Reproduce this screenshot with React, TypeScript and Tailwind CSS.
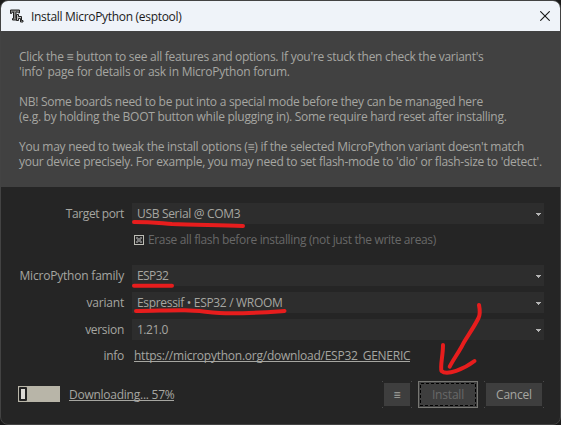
import type { ReactNode } from "react";

function Line({ children, className }: { children?: ReactNode; className?: string }) {
  return <div className={`h-[15px] whitespace-nowrap ${className ?? ""}`}>{children}</div>;
}

function Label({ children, className }: { children: ReactNode; className?: string }) {
  return <div className={`w-[123px] shrink-0 text-right whitespace-nowrap ${className ?? ""}`}>{children}</div>;
}

function Combo({ children, className }: { children: ReactNode; className?: string }) {
  return (
    <div className="ml-[8px] flex h-[21px] w-[412px] items-center justify-between bg-[#2d2d2d] pr-[3px] pl-[5px]">
      <span className={className}>{children}</span>
      <svg width="5" height="3" viewBox="0 0 5 3" className="mt-px" shapeRendering="crispEdges">
        <path d="M0 0H5V1H4V2H3V3H2V2H1V1H0Z" fill="#b4b4b4" />
      </svg>
    </div>
  );
}

function Corners() {
  return (
    <svg className="absolute inset-0 h-full w-full" shapeRendering="crispEdges">
      <rect x="0" y="0" width="1" height="1" fill="#4a4a4a" />
      <rect x="100%" y="0" width="1" height="1" fill="#4a4a4a" transform="translate(-1 0)" />
      <rect x="0" y="100%" width="1" height="1" fill="#4a4a4a" transform="translate(0 -1)" />
      <rect x="100%" y="100%" width="1" height="1" fill="#4a4a4a" transform="translate(-1 -1)" />
    </svg>
  );
}

export default function App() {
  return (
    <div className="relative h-[425px] w-[561px] overflow-hidden bg-[#1a1a1a] font-['Open_Sans','Noto_Sans',sans-serif] text-[12px] leading-[15px] text-[#a6a6a1]">
      <div className="flex h-[425px] w-[561px] flex-col overflow-hidden rounded-[8px] border border-[#434343] bg-[#252525]">
        <header className="flex h-[30px] shrink-0 items-center justify-between bg-[#eff3f9] pr-[10px] pl-[9px] text-[#1b1b1b]">
          <div className="flex items-center">
            <svg width="14" height="14" viewBox="0 0 14 14" fill="none">
              <path d="M.5 1H9.5V4H8.5L7.5 3H6V9.5H7V11H2.5V9.5H3.5V3H2.5L1.5 4.5H.5Z" fill="#8a8a8a" stroke="#222" />
              <path d="M6.5 5.5H8.5V7.5H11.5V11.5H13V13H10.5V9.5H8.5V11.5H6.5Z" fill="#bbb" stroke="#222" />
            </svg>
            <span className="ml-[7px] tracking-[-0.31px]">Install MicroPython (esptool)</span>
          </div>
          <svg width="10" height="10" viewBox="0 0 10 10" stroke="#171717" strokeWidth="1.1">
            <path d="M.3 .3L9.7 9.7M9.7 .3L.3 9.7" />
          </svg>
        </header>
        <section className="h-[156px] shrink-0 bg-[#414141] pt-[18px] pl-[18px]">
          <Line className="tracking-[-0.28px]">Click the ≡ button to see all features and options. If you're stuck then check the variant's</Line>
          <Line className="tracking-[-0.22px]">'info' page for details or ask in MicroPython forum.</Line>
          <Line />
          <Line className="tracking-[-0.27px]">NB! Some boards need to be put into a special mode before they can be managed here</Line>
          <Line className="tracking-[-0.265px]">(e.g. by holding the BOOT button while plugging in). Some require hard reset after installing.</Line>
          <Line />
          <Line className="tracking-[-0.27px]">You may need to tweak the install options (≡) if the selected MicroPython variant doesn't match</Line>
          <Line className="tracking-[-0.265px]">your device precisely. For example, you may need to set flash-mode to 'dio' or flash-size to 'detect'.</Line>
        </section>
        <main className="flex flex-col pt-[16px]">
          <div className="flex items-center">
            <Label className="tracking-[-0.4px]">Target port</Label>
            <Combo className="tracking-[-0.32px]">USB Serial @ COM3</Combo>
          </div>
          <div className="mt-[8px] ml-[133px] flex h-[15px] items-center text-[#686868]">
            <svg width="10" height="10" viewBox="0 0 10 10" shapeRendering="crispEdges">
              <rect x=".5" y=".5" width="9" height="9" fill="#252525" stroke="#bdbdb5" />
              <path d="M2 2H4V3H6V2H8V4H7V6H8V8H6V7H4V8H2V6H3V4H2Z" fill="#777" />
            </svg>
            <span className="ml-[4px] tracking-[-0.35px]">Erase all flash before installing (not just the write areas)</span>
          </div>
          <div className="mt-[18px] flex items-center">
            <Label className="tracking-[-0.2px]">MicroPython family</Label>
            <Combo className="tracking-[-0.6px]">ESP32</Combo>
          </div>
          <div className="mt-[6px] flex items-center">
            <Label className="tracking-[-0.2px]">variant</Label>
            <Combo className="tracking-[-0.32px]">Espressif • ESP32 / WROOM</Combo>
          </div>
          <div className="mt-[6px] flex items-center">
            <Label className="tracking-[-0.3px]">version</Label>
            <Combo className="tracking-[-0.5px]">1.21.0</Combo>
          </div>
          <div className="mt-[8px] flex h-[15px] items-start">
            <Label className="tracking-[-0.3px]">info</Label>
            <a className="ml-[10px] h-[14px] border-b border-[#a6a6a1] leading-[15px] tracking-[-0.24px]">https://micropython.org/download/ESP32_GENERIC</a>
          </div>
        </main>
        <footer className="mt-[18px] flex h-[27px] shrink-0 items-center pl-[17px]">
          <div className="-mt-px flex h-[16px] w-[42px] items-center bg-[#b8b5a8] pl-px">
            <div className="h-[14px] w-[8px] rounded-[1px] border-2 border-[#222] bg-[#dcdad5]" />
          </div>
          <a className="-mt-px ml-[9px] h-[14px] border-b border-[#a6a6a1] leading-[15px] tracking-[-0.25px]">Downloading... 57%</a>
          <div className="mr-[15px] ml-auto flex h-[27px] gap-[6px]">
            <button className="relative h-[27px] w-[30px] p-[2px]">
              <Corners />
              <span className="flex h-full items-center justify-center bg-[#3e3e3e]">≡</span>
            </button>
            <button className="h-[27px] w-[60px] border border-[#777773] bg-[#3e3e3e] p-px text-[#686868]">
              <span className="relative flex h-full items-center justify-center tracking-[-0.2px]">
                <svg className="absolute inset-0" width="56" height="23" shapeRendering="crispEdges">
                  <rect x=".5" y=".5" width="55" height="22" fill="none" stroke="#000" strokeDasharray="3 2" />
                </svg>
                Install
              </span>
            </button>
            <button className="relative mr-px h-[27px] w-[60px] p-[2px]">
              <Corners />
              <span className="flex h-full items-center justify-center bg-[#3e3e3e] tracking-[-0.2px]">Cancel</span>
            </button>
          </div>
        </footer>
      </div>
      <svg className="pointer-events-none absolute inset-0" width="561" height="425" fill="none" stroke="#e71d1d" strokeWidth="4" strokeLinecap="round" strokeLinejoin="round">
        <path d="M134 222C151 222 158 223 172 224C193 225 216 225 243 226" />
        <path d="M134 285.7H172" />
        <path d="M136 311C154 311 170 310 185 310.3C202 310.5 211 313.3 231 313.3C253 313.3 270 312 284.5 311" />
        <path d="M479 305C480 310 480 315 478.5 318C472 331 465 339 462 346C457 355 453 360 449.7 366.7" />
        <path d="M443 345C443 356 440 366 441.5 371C447 376 464 369 474.5 361" />
      </svg>
    </div>
  );
}
